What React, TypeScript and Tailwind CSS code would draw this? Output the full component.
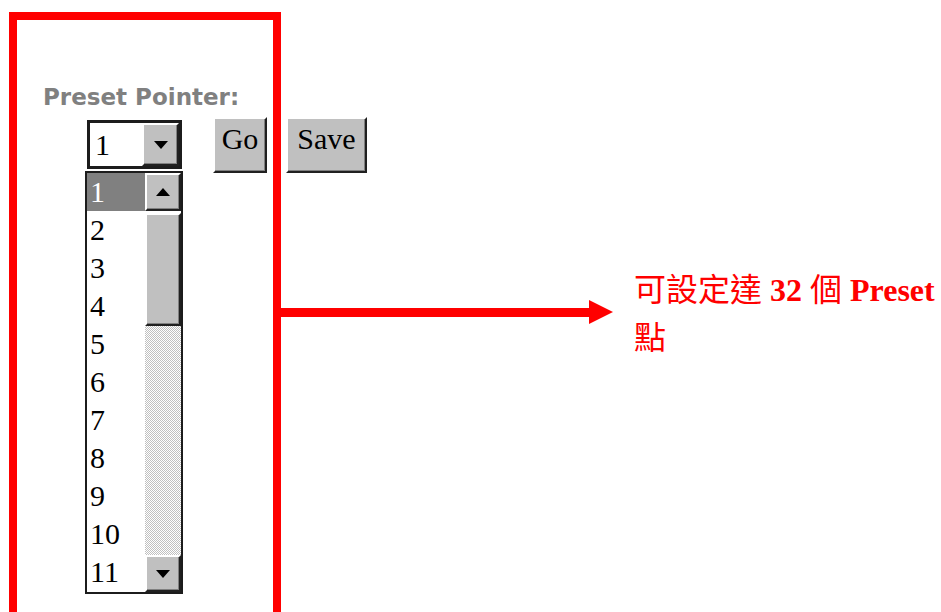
import React from "react";

const serif = { fontFamily: '"Liberation Serif", "Noto Sans CJK TC", serif' };

function Bevel({ className = "", children }: { className?: string; children?: React.ReactNode }) {
  return (
    <div
      className={
        "flex items-center justify-center bg-[#c0c0c0] border-t-2 border-l-2 border-t-white border-l-white border-r-2 border-b-2 border-r-[#202020] border-b-[#202020] shadow-[inset_-1px_-1px_#808080] " +
        className
      }
    >
      {children}
    </div>
  );
}

function Tri({ up }: { up?: boolean }) {
  return (
    <svg width="14" height="8" viewBox="0 0 14 8">
      {up ? <polygon points="0,8 7,0 14,8" fill="#000" /> : <polygon points="0,0 14,0 7,8" fill="#000" />}
    </svg>
  );
}

export default function App() {
  const items = ["1", "2", "3", "4", "5", "6", "7", "8", "9", "10", "11"];

  return (
    <div className="w-[941px] h-[612px] overflow-hidden bg-white flex">
      {/* red frame */}
      <div className="ml-[9px] mt-[12px] w-[272px] h-[700px] shrink-0 border-8 border-[#ff0000] pl-[26px] pt-[66px]">
        <div
          className="text-[23px] leading-[23px] font-bold text-[#808080] whitespace-nowrap"
          style={{ fontFamily: '"DejaVu Sans", sans-serif' }}
        >
          Preset Pointer:
        </div>

        <div className="flex items-start mt-[8px]">
          <div className="ml-[42px] pt-[3px] flex flex-col">
            {/* select */}
            <div className="ml-[2px] w-[95px] h-[49px] border-[3px] border-[#1c1c1c] bg-white flex">
              <div className="flex-1 pl-[5px] text-[30px] leading-[43px] text-black" style={serif}>
                1
              </div>
              <Bevel className="w-[37px] h-[43px]">
                <Tri />
              </Bevel>
            </div>

            {/* list */}
            <div className="mt-[2px] w-[98px] h-[423px] border-2 border-[#1c1c1c] bg-white flex overflow-hidden">
              <div className="flex-1 flex flex-col">
                {items.map((n, i) => (
                  <div
                    key={n}
                    className={
                      "h-[38px] pl-[3px] text-[30px] leading-[38px] " +
                      (i === 0 ? "bg-[#808080] text-white" : "text-black")
                    }
                    style={serif}
                  >
                    {n}
                  </div>
                ))}
              </div>
              <div className="w-[36px] flex flex-col">
                <Bevel className="h-[38px]">
                  <Tri up />
                </Bevel>
                <Bevel className="h-[113px] mt-[2px]" />
                <div className="flex-1 bg-[repeating-conic-gradient(#c0c0c0_0%_25%,#ffffff_0%_50%)] bg-[length:2px_2px]" />
                <Bevel className="h-[37px]">
                  <Tri />
                </Bevel>
              </div>
            </div>
          </div>

          <Bevel className="ml-[30px] w-[54px] h-[56px] shrink-0">
            <span className="text-[30px] leading-none pb-[12px]" style={serif}>
              Go
            </span>
          </Bevel>
          <Bevel className="ml-[19px] w-[81px] h-[56px] shrink-0">
            <span className="text-[30px] leading-none pb-[12px]" style={serif}>
              Save
            </span>
          </Bevel>
        </div>
      </div>

      {/* arrow */}
      <svg className="mt-[300px] shrink-0" width="332" height="24" viewBox="0 0 332 24">
        <rect x="0" y="8" width="312" height="9" fill="#ff0000" />
        <polygon points="308,0 332,12 308,24" fill="#ff0000" />
      </svg>

      <div className="ml-[21px] mt-[266px] text-[32px] leading-[48px] text-[#ff0000] whitespace-nowrap" style={serif}>
        <span>可設定達 </span>
        <span className="font-bold">32</span>
        <span> 個 </span>
        <span className="font-bold">Preset</span>
        <br />
        <span>點</span>
      </div>
    </div>
  );
}
